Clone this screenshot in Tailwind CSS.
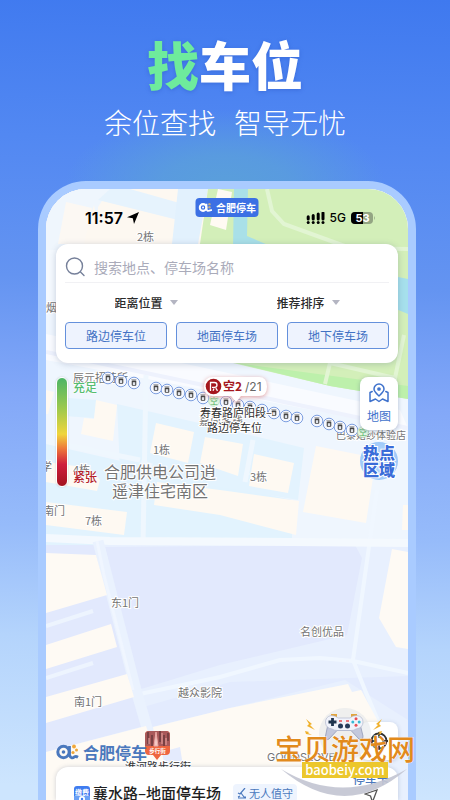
<!DOCTYPE html>
<html lang="zh-CN">
<head>
<meta charset="utf-8">
<meta name="viewport" content="width=device-width, initial-scale=1">
<title>合肥停车 · 找车位</title>
<script src="https://cdn.jsdelivr.net/npm/@tailwindcss/browser@4"></script>
</head>
<body class="font-['Noto_Sans_CJK_SC',sans-serif]">
<main class="relative flex h-screen flex-col overflow-hidden bg-[radial-gradient(ellipse_160px_75px_at_50%_185px,#5a9fdb_0%,#5a9fdbcc_40%,#5a9fdb00_100%),linear-gradient(182deg,#3f79ef_0px,#5288f2_150px,#6494f1_290px,#83a8f8_410px,#96bbfa_540px,#b4d4fc_650px,#cde5fe_800px)]">
  <header class="flex h-[181px] shrink-0 flex-col items-center pt-[34px]">
    <h1 class="text-[52px] leading-[60px] font-black text-white drop-shadow-[0_1px_2px_rgba(30,70,180,0.35)]"><span class="text-[#6eeb9c]">找</span>车位</h1>
    <p class="mt-[13px] flex gap-[18px] text-[28px] leading-[30px] font-light text-white"><span>余位查找</span><span>智导无忧</span></p>
  </header>

  <section class="relative mr-[34px] ml-[38px] flex-1 overflow-hidden rounded-t-[48px] border-8 border-b-0 border-[#a9cbff] bg-[#e8f0fe]">
    <!-- Map -->
    <svg class="absolute inset-0 h-full w-full" viewBox="46 189 362 611" preserveAspectRatio="xMidYMin slice" aria-label="地图">
      <rect x="46" y="189" width="362" height="611" fill="#e8f0fe"/>
      <path d="M46 189H408V545H46Z" fill="#eff6fe"/>
      <path d="M46 189H210L198 260H46Z" fill="#fdf8f1"/>
      <path d="M46 189H110L98 207V226L94 205L86 232L78 260H46Z" fill="#eff6fd"/>
      <path d="M110 189H130L190 206L186 222L98 200Z" fill="#e6f3fd"/>
      <path d="M66 202L92 208L84 244H58Z" fill="#fcf8f3"/>
      <path d="M178 189H208L198 244H172Z" fill="#e2f1fd"/>
      <path d="M46 250H60V300H46Z" fill="#f4f9fe"/>
      <path d="M208 189H408V399L330 386L233 363L190 350L200 244Z" fill="#d3efb9"/>
      <path d="M236 363L408 386V399L330 386Z" fill="#bdf0ab"/>
      <path d="M218 189L232 192L226 230L210 225Z" fill="#fffaf3"/>
      <path d="M234 189H248L247 236L275 248H233Z" fill="#a9e0e8"/>
      <path d="M398 277L408 279V314L396 309Z" fill="#a6e0ec"/>
      <path d="M267 189L272 211L284 224L350 248L408 249M330 363L325 384M404 335L395 378L330 363" fill="none" stroke="#e2f5d3" stroke-width="4"/>
      <path d="M46 334L400 410L408 428L46 360Z" fill="#f9fbff"/>
      <path d="M46 352L408 428" stroke="#eef2fd" stroke-width="4"/>
      <path d="M46 444L292 500V545H46Z" fill="#e2f3fe"/>
      <path d="M117 404L212 426L304 448L298 500L120 470Z" fill="#e3f3fe"/>
      <path d="M67 398L97 400L94 418L64 416Z" fill="#e2f3fe"/>
      <path d="M46 390L54 392L48 414H46ZM96 400L117 405L113 441L81 434L84 418L94 419ZM46 462L90 468L100 480L97 491L46 482ZM156 423L194 432L188 463L150 453ZM205 437L243 444L238 476L200 463ZM254 454L294 463L288 493L249 486ZM316 446L376 458L366 523L303 512ZM157 482L220 490L299 501L296 535L220 515L154 505ZM46 502L127 512L124 535L46 525ZM403 505H408V530H402Z" fill="#fef9f2"/>
      <path d="M146 375L143 545M46 441L140 460M253 440L245 482M141 462L152 466" fill="none" stroke="#eff7fe" stroke-width="5"/>
      <path d="M105 547L355 545L362 558L347 635L220 665L138 690Z" fill="#e2e9fd"/>
      <path d="M46 545H98L148 725L46 752Z" fill="#e2e9fd"/>
      <path d="M140 708L230 682L408 676V720L345 680L230 708L152 727Z" fill="#e3ebfe"/>
      <path d="M377 490L353 660L365 690L382 730M140 694L220 677L280 660L320 658L353 661L408 673" fill="none" stroke="#f0f7ff" stroke-width="4"/>
      <path d="M46 538L110 541L292 542L408 543" fill="none" stroke="#f4f9fe" stroke-width="8"/>
      <path d="M98 541L136 690L152 745" fill="none" stroke="#eaf2fe" stroke-width="11"/>
      <path d="M97 541L104 575L133 690" fill="none" stroke="#f0f6ff" stroke-width="3"/>
      <path d="M46 626L93 611M46 678L93 663" stroke="#edf4fe" stroke-width="4"/>
      <path d="M46 553L96 555L107 595L46 613ZM46 645L111 624L117 647L46 669ZM46 697L127 674L134 697L46 723ZM46 752L146 726L160 767L166 800H46ZM153 727L230 708L348 684L352 692L361 690L380 725L395 800H164ZM392 549L408 552V649L396 647L379 618Z" fill="#fefaf4"/>
      <path d="M162 752L180 747L184 772H166Z" fill="#e4ebfd"/>

      <g fill="#747474" stroke="#fff" stroke-width="2" paint-order="stroke" font-size="11" font-family="Noto Sans CJK SC, sans-serif">
        <text x="137" y="241">2栋</text>
        <text x="46" y="312">烟</text>
        <text x="73" y="382">辰元招待所</text>
        <text x="153" y="454">1栋</text>
        <text x="199" y="425">嘉尚客栈</text>
        <text x="336" y="439" font-size="10">巴黎婚纱体验店</text>
        <text x="250" y="481">3栋</text>
        <text x="41" y="471">学</text>
        <text x="73" y="474">4栋</text>
        <text x="43" y="515">南门</text>
        <text x="85" y="525">7栋</text>
        <text x="111" y="607">东1门</text>
        <text x="300" y="636">名创优品</text>
        <text x="74" y="706">南1门</text>
        <text x="178" y="697">越众影院</text>
        <text x="125" y="771" fill="#333">淮河路步行街</text>
        <text x="267" y="761" font-family="Inter, sans-serif">GOODSLOVE</text>
        <text x="104" y="478" font-size="16">合肥供电公司逍</text>
        <text x="112" y="497" font-size="16">遥津住宅南区</text>
      </g>

      <defs>
        <g id="bay">
          <circle r="5.8" fill="#f6f8fe" stroke="#7d9fe0" stroke-width="1"/>
          <rect x="-2.300" y="-2.400" width="4.600" height="5.200" rx="1" fill="#444"/>
          <rect x="-1.200" y="-.8" width="2.400" height="2.800" fill="#dfe3ea"/>
          <path d="M-2.600-3.200H2.400" stroke="#777" stroke-width=".8"/>
        </g>
      </defs>
      <use href="#bay" x="108" y="378"/><use href="#bay" x="121" y="381"/><use href="#bay" x="134" y="383"/>
      <use href="#bay" x="156" y="388"/><use href="#bay" x="167" y="390"/><use href="#bay" x="179" y="393"/><use href="#bay" x="191" y="395"/><use href="#bay" x="203" y="398"/>
      <use href="#bay" x="226" y="402"/><use href="#bay" x="238" y="405"/><use href="#bay" x="250" y="407"/><use href="#bay" x="262" y="410"/><use href="#bay" x="274" y="413"/><use href="#bay" x="286" y="416"/><use href="#bay" x="297" y="418"/>
      <use href="#bay" x="317" y="421"/><use href="#bay" x="329" y="424"/><use href="#bay" x="340" y="427"/><use href="#bay" x="352" y="430"/>
      <g fill="#e4f7e4" stroke="#b5ddb8" stroke-width=".7"><circle cx="214" cy="401" r="5.4"/><circle cx="363" cy="432" r="5.4"/></g>
      <g fill="#4fae62" font-size="8" text-anchor="middle"><text x="214" y="404">空</text><text x="363" y="435">空</text></g>
      <g fill="#2e2e2e" stroke="#fff" stroke-width="2" paint-order="stroke" font-size="11">
        <text x="200" y="417">寿春路庐阳段–</text>
        <text x="207" y="432">路边停车位</text>
      </g>
      <!-- Free-space callout -->
      <path d="M213 377H259Q267 377 267 386.500Q267 396 259 396H241L236 402L231 396H213Q204 396 204 386.500Q204 377 213 377Z" fill="#fff" style="filter:drop-shadow(0 1px 2px #e3a0a0)"/>
      <circle cx="213.500" cy="386.500" r="7.800" fill="#a5171d"/>
      <path d="M210.500 391V382.500H214.500Q217 382.500 217 385Q217 387.300 214.500 387.300H212M213 390.800L214 388.500M217.500 390.800L215.800 388.200" fill="none" stroke="#fff" stroke-width="1.300"/>
      <text x="223" y="391" font-size="12" font-weight="700" fill="#a5171d">空2</text>
      <text x="245" y="391" font-size="12" fill="#666" font-family="Inter, sans-serif">/21</text>
      <!-- Walking-street pin -->
      <path d="M149 731H166Q170 731 170 735V751Q170 755 166 755H161L157 760L153 755H149Q145 755 145 751V735Q145 731 149 731Z" fill="#ee6540"/>
      <path d="M149 731H166Q170 731 170 735V746H145V735Q145 731 149 731Z" fill="#a9595a"/>
      <path d="M148 732V744M152 735V746M160 731V742M164 735V746M168 733V741" stroke="#5b3236" stroke-width="1.200"/>
      <path d="M154 746L156 732L158 746ZM149 738V744M162 733V744M166 738V745" fill="#f5c9c4" stroke="#eba9a5" stroke-width="1"/>
      <text x="157.500" y="752.500" font-size="5.500" font-weight="700" fill="#fff" text-anchor="middle">步行街</text>
    </svg>

    <div class="relative flex h-full flex-col px-[10px]">
      <!-- Status bar -->
      <div class="flex items-center justify-between pt-5 pr-[23px] pb-[17px] pl-[29px] font-[Inter,sans-serif] text-black">
        <span class="flex items-center gap-1 text-[16px] leading-[18px] font-semibold">11:57
          <svg class="h-3 w-3" viewBox="0 0 12 12" aria-hidden="true"><path d="M12 0L7 12L5.800 6.300L0 5.200Z"/></svg>
        </span>
        <span class="flex items-center gap-[5px] text-[12px] leading-[18px] font-medium">
          <svg class="h-3 w-[19px]" viewBox="0 0 19 12" aria-hidden="true"><path d="M2.200 4.800V7M7.200 3.400V7M12.200 2V7M17 1V7" stroke="#000" stroke-width="3" stroke-linecap="round"/><g><circle cx="2.200" cy="10.400" r="1.500"/><circle cx="7.200" cy="10.400" r="1.500"/><circle cx="12.200" cy="10.400" r="1.500"/><circle cx="17" cy="10.400" r="1.500"/></g></svg>
          5G
          <svg class="h-3 w-6" viewBox="0 0 24 12" aria-hidden="true"><rect width="22" height="12" rx="4" fill="#93a583"/><path d="M4 0H12V12H4Q0 12 0 8V4Q0 0 4 0Z"/><path d="M23 4Q24.500 6 23 8Z" fill="#93a583"/><text x="11.500" y="10" font-size="11" font-weight="700" fill="#fff" text-anchor="middle">53</text></svg>
        </span>
      </div>
      <div class="absolute top-[9px] left-1/2 flex h-[19px] w-[63px] -translate-x-1/2 items-center justify-center gap-1 rounded bg-[#3c70e4] text-[10px] leading-[19px] font-bold text-white">
        <svg class="h-[11px] w-[14px]" viewBox="0 0 23 16" aria-hidden="true"><circle cx="7.500" cy="8" r="5.500" fill="none" stroke="#fff" stroke-width="3.500"/><circle cx="7.500" cy="8" r="1.600" fill="#fff"/><path d="M13 2V10Q14 15 18 13L22 12" fill="none" stroke="#fff" stroke-width="3"/><circle cx="18" cy="2.500" r="2" fill="#b9a98c"/><circle cx="18" cy="7.500" r="2" fill="#b9a98c"/></svg>合肥停车
      </div>

      <!-- Search card -->
      <form class="rounded-xl bg-white px-[9px] pb-[14px] shadow-[0_1px_6px_rgba(60,80,120,0.25)]">
        <div class="flex h-[39px] items-center border-b border-[#f1f1f4] pt-2">
          <svg class="h-5 w-5 shrink-0" viewBox="0 0 20 20" fill="none" stroke="#76809a" stroke-width="1.400" stroke-linecap="round" aria-hidden="true"><circle cx="9.500" cy="9" r="8"/><path d="M15.500 15L19 18.500"/></svg>
          <input type="search" aria-label="搜索地点、停车场名称" placeholder="搜索地点、停车场名称" class="ml-[9px] min-w-0 flex-1 bg-transparent text-[14px] leading-5 text-[#333] outline-none placeholder:text-[#aaabba]">
        </div>
        <div class="grid h-[39px] grid-cols-2 items-center text-[12px] leading-5 font-medium text-[#2c2c2c]">
          <div class="flex items-center justify-center gap-[6px]">
            <select aria-label="距离位置" class="appearance-none bg-transparent outline-none"><option>距离位置</option></select>
            <svg class="h-[5px] w-2" viewBox="0 0 8 5" aria-hidden="true"><path d="M0 0H8L4 5Z" fill="#b4b5c2"/></svg>
          </div>
          <div class="flex items-center justify-center gap-[6px]">
            <select aria-label="推荐排序" class="appearance-none bg-transparent outline-none"><option>推荐排序</option></select>
            <svg class="h-[5px] w-2" viewBox="0 0 8 5" aria-hidden="true"><path d="M0 0H8L4 5Z" fill="#b4b5c2"/></svg>
          </div>
        </div>
        <div class="grid grid-cols-3 gap-[9px] text-[12px] leading-[25px] text-[#4272c4]">
          <button type="button" class="rounded-[4px] border border-[#6490dc] bg-[#eef3fe]">路边停车位</button>
          <button type="button" class="rounded-[4px] border border-[#6490dc] bg-[#eef3fe]">地面停车场</button>
          <button type="button" class="rounded-[4px] border border-[#6490dc] bg-[#eef3fe]">地下停车场</button>
        </div>
      </form>

      <!-- Occupancy scale and map tools -->
      <div class="flex flex-1 items-start justify-between pt-[14px]">
        <div class="flex h-[110px] gap-[5px]">
          <div class="w-[12px] rounded-full border border-white bg-[linear-gradient(180deg,#4cb566_0%,#9cc94e_28%,#f0d53c_52%,#ee7a3a_65%,#cf1d3c_80%,#a3121f_100%)] shadow-[0_0_2px_rgba(0,0,0,0.2)]"></div>
          <div class="flex flex-col justify-between text-[12px] leading-[20px] font-medium [text-shadow:0_0_2px_#fff,0_0_2px_#fff,0_0_2px_#fff]">
            <span class="text-[#56bd70]">充足</span>
            <span class="text-[#b3202a]">紧张</span>
          </div>
        </div>
        <div class="flex flex-col items-center gap-3">
          <button type="button" class="flex h-[53px] w-[38px] flex-col items-center rounded-lg bg-white pt-[6px] text-[12px] leading-[18px] text-[#3f72cc] shadow-[0_1px_4px_rgba(60,80,120,0.35)]">
            <svg class="mb-[4px] h-5 w-5" viewBox="0 0 20 20" fill="none" stroke="#3f72cc" stroke-width="1.500" stroke-linecap="round" stroke-linejoin="round" aria-hidden="true"><path d="M10 13C7 10.200 5 8.500 5 6A5 5 0 0 1 15 6C15 8.500 13 10.200 10 13Z"/><circle cx="10" cy="6" r="1.100" fill="#3f72cc"/><path d="M3.200 8.500L1 9.500V18.500L6.500 16L10 18.500L13.500 16L19 18.500V9.500L16.800 8.500"/></svg>地图
          </button>
          <button type="button" class="flex h-[38px] w-[38px] items-center justify-center rounded-full bg-[radial-gradient(circle,#c5e0fd,#8dbff7)] text-[16px] leading-[17px] font-black text-[#3a6cd9] [paint-order:stroke] [-webkit-text-stroke:2px_#fff]"><span>热点<br>区域</span></button>
        </div>
      </div>

      <!-- Logo and locate button -->
      <div class="flex items-end justify-between pb-[7px]">
        <div class="flex items-center gap-1 text-[16px] leading-4 font-bold text-[#4a78bd]">
          <svg class="h-4 w-[23px]" viewBox="0 0 23 16" aria-hidden="true"><circle cx="7.500" cy="8" r="5.700" fill="none" stroke="#4a78bd" stroke-width="3"/><circle cx="7.500" cy="8" r="1.800" fill="#4a78bd"/><path d="M13.500 2V11Q15 15.500 18.500 12.800Q20 12 22 13.200" fill="none" stroke="#4a78bd" stroke-width="2.800"/><circle cx="18" cy="2.500" r="1.900" fill="#f0a73a"/><circle cx="20.500" cy="6" r="1.500" fill="#f0a73a"/><circle cx="17" cy="8.500" r="1.600" fill="#f0a73a"/></svg>合肥停车
        </div>
        <button type="button" aria-label="定位" class="flex h-[38px] w-[38px] items-center justify-center rounded-lg bg-white shadow-[0_1px_4px_rgba(60,80,120,0.25)]">
          <svg class="h-5 w-5" viewBox="0 0 20 20" fill="none" stroke="#333" stroke-width="1.800" aria-hidden="true"><circle cx="10" cy="10" r="7.500"/><path d="M10 1V7M10 13V19M1 10H7M13 10H19"/></svg>
        </button>
      </div>

      <!-- Result card -->
      <article class="flex h-[33px] shrink-0 items-start rounded-t-xl bg-white pr-[9px] pl-[18px] shadow-[0_0_4px_rgba(60,80,120,0.25)]">
        <div class="flex flex-1 items-center pt-4">
          <svg class="h-[18px] w-4" viewBox="0 0 16 18" aria-hidden="true"><rect width="16" height="13" rx="3" y="2" fill="#3f7cf0"/><text x="8" y="10.500" font-size="7" font-weight="700" fill="#fff" text-anchor="middle">缴费</text><path d="M0 12H16V18H0Z" fill="#6aa0f5"/><circle cx="8" cy="15" r="3" fill="#fff"/><circle cx="8" cy="15" r="1.200" fill="#3f7cf0"/></svg>
          <h2 class="ml-[3px] text-[15px] leading-5 font-medium text-[#1f1f1f]">襄水路–地面停车场</h2>
          <span class="ml-3 flex items-center gap-[2px] rounded bg-[#eef4fe] px-[4px] text-[11px] leading-[18px] text-[#4a78bd]">
            <svg class="h-[11px] w-[10px]" viewBox="0 0 10 11" fill="none" stroke="#4a78bd" stroke-width="1.200" aria-hidden="true"><path d="M8 0L3 6L1 5M4 5L7 9L9 9M1 10H9M3 8L1 9"/></svg>无人值守
          </span>
        </div>
        <div class="flex flex-col items-center pt-[2px] text-[12px] leading-5 font-medium text-[#4a78bd]">
          <a href="#">停车卡</a>
          <svg class="h-[14px] w-[14px]" viewBox="0 0 14 14" fill="none" stroke="#555" stroke-width="1.300" aria-hidden="true"><path d="M13 1L8.500 13L6.500 7L1 5Z"/></svg>
        </div>
      </article>
    </div>
  </section>

  <!-- Site watermark -->
  <aside class="pointer-events-none absolute right-[34px] bottom-0 flex h-[92px] w-[142px] flex-col items-center pt-[26px]">
    <svg class="absolute inset-0 h-full w-full" viewBox="274 708 142 92" aria-hidden="true">
      <circle cx="345" cy="734" r="26" fill="#dfe3e8" opacity=".5"/>
      <path d="M281 769Q342 806 407 769Q345 823 281 769Z" fill="#c3c6d3" opacity=".92"/>
      <path d="M331 716H337M351 716H357" stroke="#e3a53c" stroke-width="4"/>
      <path d="M328 724L325.500 736Q325.500 741 329 739L337 730.500H351L359 739Q363 741 363 736L360 724Z" fill="#c3c8dd" stroke="#9299b6" stroke-width=".8"/>
      <path d="M331 715.500Q325 717 325.500 723Q326 728 332 729Q334 730.500 338 730.500H351Q354 730.500 356 729Q363 728 363 722Q363 716.500 357 715.500Q352 715.500 350 718H338Q336 715.500 331 715.500Z" fill="#f1f3fb" stroke="#aab0c8" stroke-width=".6"/>
      <path d="M332.500 718V726M328.500 722H336.500" stroke="#20354f" stroke-width="2.800"/>
      <circle cx="356" cy="718.800" r="1.500" fill="#e94f55"/><circle cx="356" cy="725.200" r="1.500" fill="#e94f55"/><circle cx="352.800" cy="722" r="1.500" fill="#35b9d5"/><circle cx="359.200" cy="722" r="1.500" fill="#35b9d5"/>
      <circle cx="340.500" cy="726" r="2.500" fill="#263b5b"/><circle cx="347.500" cy="726" r="2.500" fill="#263b5b"/>
      <path d="M339 721H342M346 721H349" stroke="#e94f55" stroke-width="1.500"/>
      <path d="M306 719L312 724L310 725L315 730L307 726L309 724ZM382 719L376 724L378 725L373 730L381 726L379 724ZM305 731L309 732L308 733L312 735L306 734ZM382 731L378 732L380 733L376 735L381 734Z" fill="#f0b12c"/>
    </svg>
    <strong class="relative text-[28px] leading-7 font-medium whitespace-nowrap text-[#e28a1c] [paint-order:stroke] [-webkit-text-stroke:1px_#ffffffb0]">宝贝游戏网</strong>
    <span class="relative h-4 w-[86px] bg-[#ecc72c] text-center text-[13px] leading-4 font-medium text-white">baobeiy.com</span>
  </aside>
</main>
</body>
</html>
